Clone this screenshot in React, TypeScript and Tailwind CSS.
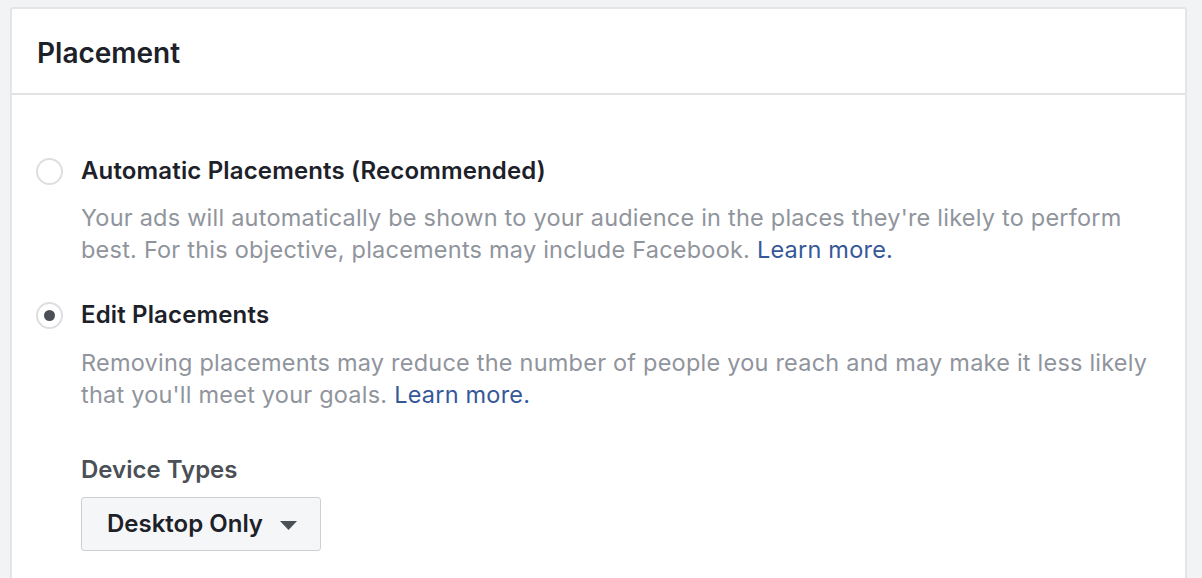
import React from "react";

function Radio({ checked }: { checked?: boolean }) {
  return (
    <div className="w-[27px] h-[27px] rounded-full border-2 border-[#dcdee1] bg-white flex items-center justify-center shrink-0">
      {checked && <div className="w-[11px] h-[11px] rounded-full bg-[#4b4f56]" />}
    </div>
  );
}

export default function App() {
  return (
    <div
      className="w-[1202px] h-[578px] bg-[#f2f3f4] pl-[10px] pt-[7px] overflow-hidden"
      style={{ fontFamily: "Inter, 'Helvetica Neue', Arial, sans-serif" }}
    >
      <div className="w-[1177px] h-[600px] bg-white border-2 border-[#e4e5e7] rounded-t-[3px]">
        <div className="h-[86px] flex items-center pl-[25px] pt-[3px] border-b-2 border-[#e2e3e5]">
          <span className="text-[28px] font-semibold text-[#1d2129]">Placement</span>
        </div>
        <div className="pl-[24px] pt-[61px]">
          <div className="flex items-center h-[30px]">
            <Radio />
            <span className="ml-[18px] text-[24px] font-semibold text-[#1d2129] tracking-[0.15px]">Automatic Placements (Recommended)</span>
          </div>
          <div className="ml-[45px] mt-[16px] text-[23.5px] leading-[32px] text-[#90949c] tracking-[0.22px] w-[1080px]">
            Your ads will automatically be shown to your audience in the places they're likely to perform best. For this objective, placements may include Facebook.{" "}
            <span className="text-[#365899]">Learn more.</span>
          </div>
          <div className="flex items-center h-[30px] mt-[34px]">
            <Radio checked />
            <span className="ml-[18px] text-[24px] font-semibold text-[#1d2129] tracking-[0.15px]">Edit Placements</span>
          </div>
          <div className="ml-[45px] mt-[17px] text-[23.5px] leading-[32px] text-[#90949c] tracking-[0.22px] w-[1080px]">
            Removing placements may reduce the number of people you reach and may make it less likely that you'll meet your goals.{" "}
            <span className="text-[#365899]">Learn more.</span>
          </div>
          <div className="ml-[45px] mt-[44px] text-[24px] font-semibold text-[#4b4f56] leading-[30px]">Device Types</div>
          <div className="ml-[45px] mt-[12px] w-[240px] h-[54px] bg-[#f5f6f7] border border-[#ccd0d5] rounded-[3px] flex items-center pl-[25px]">
            <span className="text-[24px] font-semibold text-[#1d2129]">Desktop Only</span>
            <svg className="ml-[17px] mt-[2px]" width="17" height="9" viewBox="0 0 17 9">
              <path d="M0 0 L17 0 L8.5 9 Z" fill="#4b4f56" />
            </svg>
          </div>
        </div>
      </div>
    </div>
  );
}
